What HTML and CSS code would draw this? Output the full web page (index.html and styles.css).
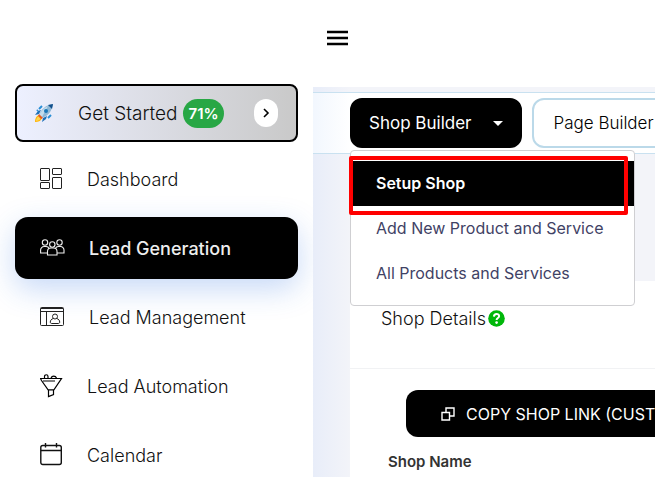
FILE: index.html
```html
<!DOCTYPE html>
<html lang="en">
<head>
<meta charset="utf-8">
<meta name="viewport" content="width=device-width, initial-scale=1">
<title>Shop Builder</title>
<link rel="stylesheet" href="styles.css">
</head>
<body>
<div class="app">
  <nav class="sidebar" aria-label="Main">
    <a class="start" href="#">
      <svg class="rocket" width="20" height="20" viewBox="0 0 20 20" aria-hidden="true">
        <path d="M1 19c0-3 1-6 4-7l3 3c-1 3-4 4-7 4z" fill="#ffb300"/>
        <path d="M2 18c0-2 1-4 3-5l2 2c-1 2-3 3-5 3z" fill="#ffd54f"/>
        <path d="M7 7L4 8 1 12l4-1zM13 13l-1 3-4 3 1-4z" fill="#1d6fb8"/>
        <path d="M5 12C7 6 12 2 19 1c-1 7-5 12-11 14z" fill="#8fb8d6"/>
        <path d="M5 12C7 8 10 5 14 3L8 14z" fill="#c3dcec"/>
        <path d="M14 2l5-1-1 5z" fill="#12508c"/>
        <circle cx="12" cy="8" r="2" fill="#1976b8"/>
        <path d="M5 11l4 4-2 1-3-3z" fill="#e65b20"/>
        <path d="M5 6l3-3M3 8l1-1M14 15l3-3" stroke="#2b8fd6" stroke-width="2"/>
      </svg>
      <span class="start-text">Get Started</span>
      <span class="badge">71%</span>
      <span class="go">
        <svg width="8" height="10" viewBox="0 0 8 10" fill="none" stroke="#000" stroke-width="1.6" aria-hidden="true"><path d="M2 1l4 4-4 4"/></svg>
      </span>
    </a>
    <a class="item" href="#">
      <svg width="24" height="24" viewBox="0 0 24 24" fill="none" stroke="#222" aria-hidden="true"><rect x=".5" y="1.5" width="9" height="12" rx=".5"/><rect x="12.5" y="1.5" width="9" height="6" rx=".5"/><rect x=".5" y="15.5" width="9" height="6" rx=".5"/><rect x="12.5" y="10.5" width="9" height="11" rx=".5"/></svg>
      <span>Dashboard</span>
    </a>
    <a class="item active" href="#">
      <svg width="26" height="24" viewBox="0 0 26 24" fill="none" stroke="#eee" stroke-width="1.1" aria-hidden="true"><circle cx="5" cy="6.500" r="2.700"/><circle cx="19.500" cy="6.500" r="2.700"/><circle cx="12.300" cy="8.500" r="2.700"/><path d="M7.500 19v-3.500a3.500 3.500 0 0 1 3.500-3.500h2.500a3.500 3.500 0 0 1 3.500 3.500V19zM7.500 17H.6v-3a3.500 3.500 0 0 1 3.500-3.500H6a3 3 0 0 1 3 2M17 17h7v-3a3.500 3.500 0 0 0-3.500-3.500H18.500a3 3 0 0 0-3 2"/></svg>
      <span>Lead Generation</span>
    </a>
    <a class="item" href="#">
      <svg width="26" height="24" viewBox="0 0 26 24" fill="none" stroke="#222" aria-hidden="true"><rect x=".5" y="2.5" width="23" height="18" rx="1"/><path d="M.5 6.500h23M6.500 6.500v14M1 3.500h22"/><circle cx="15" cy="11.500" r="2.500"/><path d="M13.300 13.500c-2 .5-3 2-3 3.500 0 1 .5 1.500 1.500 1.500h6.400c1 0 1.500-.5 1.500-1.500 0-1.500-1-3-3-3.500"/></svg>
      <span>Lead Management</span>
    </a>
    <a class="item" href="#">
      <svg width="24" height="24" viewBox="0 0 24 24" fill="none" stroke="#000" stroke-width="1.2" aria-hidden="true"><path d="M.5 4.500h21l-8 12v4l-5 2v-6L1.500 6.500zM3 7h12M8.500 15.800h5M4.500 4V2.500a1.700 1.700 0 0 1 3.500 0V4M11 4c1-2.500 4.500-2.500 5.500 0"/></svg>
      <span>Lead Automation</span>
    </a>
    <a class="item" href="#">
      <svg width="24" height="24" viewBox="0 0 24 24" fill="none" stroke="#111" stroke-width="1.4" aria-hidden="true"><rect x=".8" y="2.500" width="20.500" height="19" rx="2"/><path d="M.8 7.500h20.500M5.500 0v4.500M16.500 0v4.500"/></svg>
      <span>Calendar</span>
    </a>
  </nav>
  <main class="main">
    <header class="top">
      <button class="menu-button" type="button" aria-label="Toggle menu">
        <svg width="21" height="16" viewBox="0 0 21 16" stroke="#000" stroke-width="2.4" aria-hidden="true"><path d="M0 2h21M0 8h21M0 14h21"/></svg>
      </button>
    </header>
    <div class="tabs">
      <div class="dropdown">
        <button class="tab tab-active" type="button" aria-expanded="true">Shop Builder
          <svg width="10" height="5" viewBox="0 0 10 5" fill="#fff" aria-hidden="true"><path d="M0 0h10L5 5z"/></svg>
        </button>
        <div class="menu">
          <a class="option selected" href="#">Setup Shop</a>
          <a class="option" href="#">Add New Product and Service</a>
          <a class="option" href="#">All Products and Services</a>
          <span class="highlight"></span>
        </div>
      </div>
      <button class="tab" type="button">Page Builder</button>
    </div>
    <section class="card">
      <h1 class="card-title">Shop Details
        <svg width="17" height="17" viewBox="0 0 17 17" aria-hidden="true"><circle cx="8.500" cy="8.500" r="8.300" fill="#00b70a"/><path d="M5.900 6.600c.2-3.500 5.300-3.300 5.200-.4 0 1.800-2.500 1.800-2.500 3.700" fill="none" stroke="#fff" stroke-width="2"/><circle cx="8.600" cy="12.600" r="1.300" fill="#fff"/></svg>
      </h1>
      <div class="card-body">
        <button class="copy" type="button">
          <svg width="14" height="14" viewBox="0 0 14 14" fill="none" stroke="#fff" stroke-width="1.4" aria-hidden="true"><path d="M1 5.500h7.500V13H1zM5 5.500V1h8v8H8.500"/></svg>
          COPY SHOP LINK (CUSTOM DOMAIN)
        </button>
        <h2 class="field-name">Shop Name</h2>
      </div>
    </section>
  </main>
</div>
</body>
</html>
```
FILE: styles.css
```css
* { box-sizing: border-box; }
body {
  margin: 0;
  overflow: hidden;
  font-family: Inter, "Liberation Sans", sans-serif;
  color: #111;
  background: #fff;
}
a { color: inherit; text-decoration: none; }
button { font: inherit; cursor: pointer; }
svg { flex: none; }
.app {
  display: grid;
  grid-template-columns: 313px minmax(0, 1fr);
  height: 100vh;
  overflow: hidden;
}
.sidebar {
  display: flex;
  flex-direction: column;
  gap: 7px;
  padding: 84px 15px 0;
  overflow: hidden;
}
.start {
  display: flex;
  flex: none;
  align-items: center;
  height: 58px;
  margin-bottom: -1px;
  padding: 0 18px 0 17px;
  border: 2px solid #000;
  border-radius: 8px;
  background: linear-gradient(90deg, #edf0ff, #c9c9c9);
  font-size: 19px;
  font-weight: 300;
}
.start-text { margin-left: 24px; }
.badge {
  margin-left: 6px;
  padding: 0 5px;
  border-radius: 15px;
  background: #28a745;
  color: #fff;
  font-size: 15px;
  font-weight: 600;
  line-height: 29px;
}
.go {
  display: grid;
  place-items: center;
  width: 24px;
  height: 28px;
  margin-left: auto;
  border-radius: 12px;
  background: #fff;
}
.item {
  display: flex;
  flex: none;
  gap: 23px;
  align-items: center;
  height: 62px;
  padding: 0 25px;
  border-radius: 13px;
  font-size: 18px;
  font-weight: 300;
}
.active {
  background: #000;
  color: #eee;
  font-weight: 500;
  box-shadow: 0 10px 30px rgba(40, 110, 225, 0.26);
}
.main {
  background: linear-gradient(90deg, #e8edf9, #f3f4f9 38px);
}
.top {
  display: flex;
  align-items: center;
  height: 87px;
  padding: 0 14px 11px;
  background: #fff;
}
.menu-button {
  display: flex;
  padding: 0;
  border: 0;
  background: none;
}
.tabs {
  display: flex;
  gap: 10px;
  margin-top: 5px;
  padding: 5px 0 5px 37px;
  border: solid #c9e1f0;
  border-width: 1px 0;
  background: linear-gradient(90deg, #f2f7fe, #fff 38px);
}
.dropdown { position: relative; }
.tab {
  display: flex;
  flex: none;
  align-items: center;
  gap: 22px;
  height: 50px;
  padding: 0 19px;
  border: 2px solid #bbd9e9;
  border-radius: 12px;
  background: #fff;
  color: #000;
  font-size: 17px;
  font-weight: 300;
  white-space: nowrap;
}
.tab-active {
  padding: 0 17px;
  border-color: #000;
  background: #000;
  color: #fff;
  font-weight: 400;
}
.menu {
  position: absolute;
  z-index: 2;
  top: 52px;
  left: 0;
  width: 285px;
  padding: 10px 0 9px;
  border: 1px solid #cfcfd2;
  border-radius: 4px;
  background: #fff;
}
.option {
  display: block;
  padding: 0 25px;
  color: #3f4265;
  font-size: 16px;
  line-height: 45px;
  white-space: nowrap;
}
.selected {
  background: #000;
  color: #fff;
  font-weight: 600;
}
.highlight {
  position: absolute;
  inset: 5px 6px 90px -2px;
  border: 4px solid #f00;
  border-radius: 2px;
}
.card {
  min-height: 250px;
  margin: 127px 0 0 37px;
  background: #fff;
}
.card-title {
  display: flex;
  align-items: center;
  gap: 2px;
  margin: 0;
  padding: 25px 31px 37px;
  border-bottom: 1px solid #f1f2f4;
  font-size: 18px;
  font-weight: 300;
  line-height: 25px;
}
.card-body {
  padding: 21px 0 0 38px;
}
.copy {
  display: flex;
  align-items: center;
  gap: 11px;
  height: 47px;
  margin-left: 18px;
  padding: 0 35px;
  border: 0;
  border-radius: 12px;
  background: #000;
  color: #fff;
  font-size: 16px;
  white-space: nowrap;
}
.field-name {
  margin: 15px 0 0;
  color: #333;
  font-size: 15px;
  font-weight: 600;
  line-height: 20px;
}
```
